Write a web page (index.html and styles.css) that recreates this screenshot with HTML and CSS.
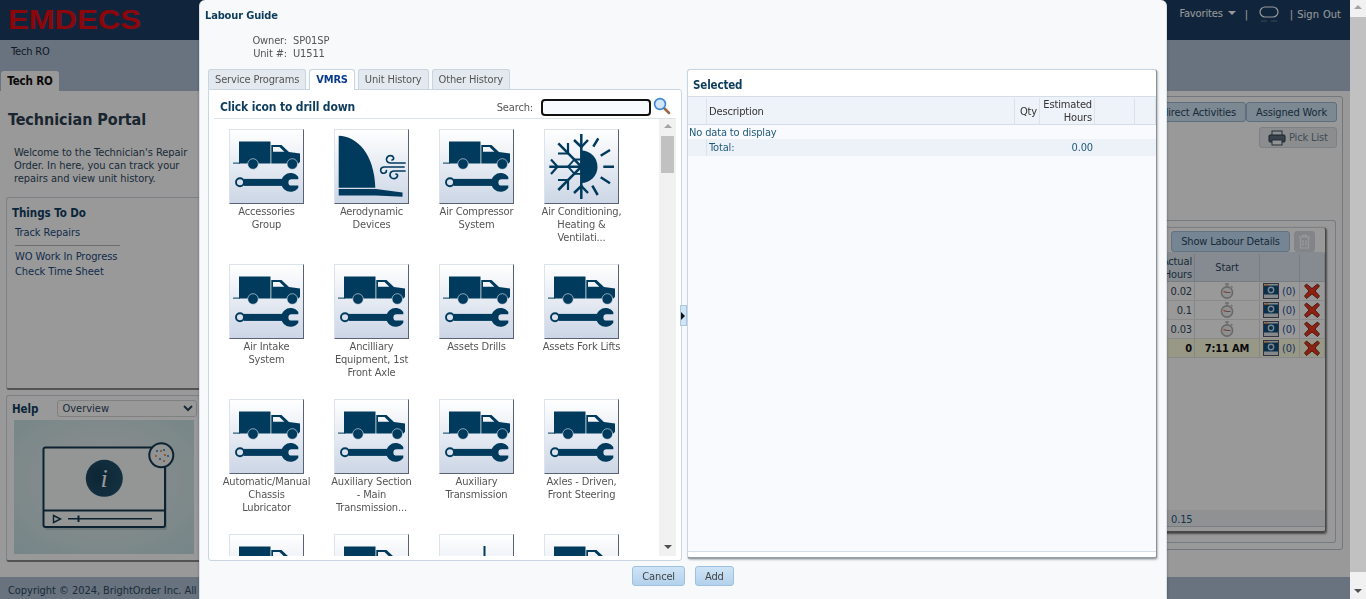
FILE: index.html
```html
<!DOCTYPE html>
<html>
<head>
  <title>Tech RO</title>
  <link rel="stylesheet" href="styles.css">
</head>
<body>
  <svg class="sprite" xmlns="http://www.w3.org/2000/svg">
    <symbol id="truck" viewBox="0 0 75 75">
      <rect x="4" y="33.6" width="7" height="1" fill="#003a5d"/>
      <path fill="#003a5d" d="M10 12.5H41.5V34.5H10Z"/>
      <path fill="#003a5d" d="M42.3 16H52.5L60 23L71 24.4V32.7L69.5 34.5H42.3Z"/>
      <path fill="#f3f5fa" d="M44 18H50.5L55.3 22.7H44Z"/>
      <circle cx="24" cy="35" r="5.3" fill="#003a5d" stroke="#e6eaf2" stroke-width=".6"/>
      <circle cx="63.3" cy="35" r="5.3" fill="#003a5d" stroke="#e6eaf2" stroke-width=".6"/>
      <circle cx="11" cy="53.3" r="4" fill="none" stroke="#003a5d" stroke-width="1.9"/>
      <rect x="15" y="49.9" width="40" height="7" fill="#003a5d"/>
      <path fill="#003a5d" d="M69.3 48A9.4 9.4 0 1 0 69.3 58.8L69.3 56.6H62.6A3.2 3.2 0 0 1 62.6 50.2H69.3Z"/>
    </symbol>
    <symbol id="aero" viewBox="0 0 75 75">
      <path fill="#003a5d" d="M4.7 6.7C23 7.5 40 24 41.3 58.7H4.7Z"/>
      <path fill="#003a5d" d="M4.7 60H42L68.5 63.6V67.7L42 66.4H4.7Z"/>
      <g fill="none" stroke="#003a5d" stroke-width="1.7" stroke-linecap="round">
        <path d="M71 34H56.5C53 34 51.5 31 53 28.5C54.5 26 58.5 26 59.5 28.5C60 30 59 31 58 31"/>
        <path d="M70 38H50C46.5 38 45.8 42 47.5 43.5C49.5 45 52.5 44 52.5 41.5"/>
        <path d="M71 42H60C56 42 55 46 57 48.5C59 50.5 63 50 63.5 47C63.8 45.5 62.5 45 62 45"/>
      </g>
    </symbol>
    <symbol id="climate" viewBox="0 0 75 75">
      <path fill="#003a5d" d="M37.3 21.5A16.2 16.2 0 0 1 37.3 53.9Z"/>
      <g fill="none" stroke="#003a5d" stroke-width="2.5">
        <path d="M37.3 5V70"/>
        <path d="M49.3 17.7L54.3 9.3M56.7 26.7L66 21M59.3 37.7H70M56.7 48.3L66 54.3M48.3 56.7L53.7 66"/>
        <path d="M5.3 37.7H37.3M14.3 14.3L37.3 37.7M14.3 61L37.3 37.7"/>
        <path d="M30 11L37.3 18L44 11M30 64L37.3 57L44 64"/>
        <path d="M7 30.5L13.5 37.7L7 45M14 24.5H24V14M14 51H24V61" stroke-width="2.2"/>
        <path d="M24 37.7L30.5 30.5H37.3M24 37.7L30.5 44.8H37.3" stroke-width="1.8"/>
      </g>
    </symbol>
    <symbol id="post" viewBox="0 0 75 75">
      <rect x="44.5" y="12" width="2" height="55" fill="#003a5d"/>
    </symbol>
    <symbol id="watch" viewBox="0 0 16 16">
      <path d="M6 1H10M8 1V4M12 3L13.5 4.5" fill="none" stroke="#b8b8b8" stroke-width="1.4"/>
      <circle cx="8" cy="9.5" r="5.6" fill="#f0f0f0" stroke="#b0b0b0" stroke-width="1.6"/>
      <path d="M8 9.5L4.5 8.5" stroke="#e85050" stroke-width="1.2"/>
      <path d="M8 9.5H11.5" stroke="#888" stroke-width="1"/>
    </symbol>
    <symbol id="camera" viewBox="0 0 16 16">
      <rect x=".5" y=".5" width="15" height="15" fill="#dfe4e8" stroke="#556"/>
      <rect x="1" y="2.5" width="14" height="9" fill="#0f4f7d"/>
      <rect x="2" y="1.5" width="3" height="1.5" fill="#f08030"/>
      <circle cx="8" cy="7" r="3.4" fill="#cfe0ea"/>
      <circle cx="8" cy="7" r="2" fill="#0f4f7d"/>
    </symbol>
    <symbol id="cross" viewBox="0 0 16 16">
      <path d="M2.5 1L8 5.5L13.5 1L15.5 3L11 8L15.5 13L13.5 15.5L8 11L2.5 15.5L.5 13L5 8L.5 3Z" fill="#ef3a1a" stroke="#511" stroke-width=".8"/>
    </symbol>
  </svg>

  <div class="page">
    <header class="topbar">
      <div class="logo"><span>EMDECS</span></div>
      <nav class="topnav">
        <span class="fav">Favorites <i class="caret"></i></span>
        <span class="sep">|</span>
        <svg class="chat" width="20" height="16" viewBox="0 0 20 16"><rect x="1" y="1" width="18" height="10" rx="5" fill="none" stroke="#fff" stroke-width="1.2"/><path d="M2 15H8M12 15H18" stroke="#5f7b96" stroke-width="1"/></svg>
        <span class="signout">| Sign Out</span>
      </nav>
    </header>

    <div class="band">
      <div class="crumb">Tech RO</div>
      <div class="tab-main">Tech RO</div>
    </div>

    <div class="content">
      <aside class="side">
        <h1>Technician Portal</h1>
        <p class="intro">Welcome to the Technician's Repair Order. In here, you can track your repairs and view unit history.</p>
        <section class="box todo">
          <h3>Things To Do</h3>
          <a class="first">Track Repairs</a>
          <hr>
          <a>WO Work In Progress</a>
          <a>Check Time Sheet</a>
        </section>
        <section class="box help">
          <div class="help-head">
            <h3>Help</h3>
            <select class="help-select"><option>Overview</option></select>
          </div>
          <svg class="help-pic" viewBox="0 0 180 134" width="180" height="134">
            <defs>
              <radialGradient id="pic-bg" cx="50%" cy="45%" r="70%">
                <stop offset="0" stop-color="#eceeee"/>
                <stop offset="1" stop-color="#c6e0e4"/>
              </radialGradient>
              <radialGradient id="info-bg" cx="35%" cy="45%" r="70%">
                <stop offset="0" stop-color="#173f58"/>
                <stop offset="1" stop-color="#22536e"/>
              </radialGradient>
            </defs>
            <rect width="180" height="134" fill="url(#pic-bg)"/>
            <rect x="31" y="31" width="122" height="79" rx="2" fill="#8fa5a6" opacity=".45"/>
            <rect x="29.5" y="27.5" width="121.5" height="79.5" rx="2" fill="#f7f8f8" stroke="#163a50" stroke-width="2"/>
            <path d="M29.5 90.5H151" stroke="#163a50" stroke-width="2"/>
            <circle cx="90.3" cy="58.3" r="18.5" fill="url(#info-bg)"/>
            <text x="90" y="67" class="pic-i">i</text>
            <path d="M39.5 95.5L46.5 99L39.5 102.5Z" fill="none" stroke="#163a50" stroke-width="1.4"/>
            <path d="M54 98.8H138" stroke="#163a50" stroke-width="1.6"/>
            <path d="M64.5 95.5V102" stroke="#163a50" stroke-width="2"/>
            <circle cx="147.3" cy="35.3" r="12" fill="#f4f5f5" stroke="#163a50" stroke-width="2"/>
            <g fill="#3f88c2">
              <circle cx="143" cy="31" r="1.1"/><circle cx="150" cy="30" r="1.1"/><circle cx="154" cy="36" r="1.1"/><circle cx="146" cy="39" r="1.1"/>
            </g>
            <g fill="#e8802c">
              <circle cx="147" cy="31" r="1"/><circle cx="142" cy="36" r="1"/><circle cx="151" cy="35" r="1"/><circle cx="150" cy="41" r="1"/>
            </g>
          </svg>
        </section>
      </aside>

      <main class="main">
        <div class="outer">
          <div class="action-row">
            <button class="btn btn-seg">Indirect Activities</button>
            <button class="btn btn-seg">Assigned Work</button>
          </div>
          <div class="action-row pick-row">
            <button class="btn btn-off">
              <svg width="18" height="16" viewBox="0 0 18 16"><rect x="4" y="1" width="10" height="5" fill="#e8eef4" stroke="#3c4c5c"/><rect x="1" y="5" width="16" height="7" rx="1" fill="#5f6e7e" stroke="#2c3a48"/><rect x="4" y="10" width="10" height="5" fill="#f4f6f8" stroke="#3c4c5c"/></svg>
              Pick List
            </button>
          </div>
          <div class="inner">
            <div class="card">
              <div class="card-tools">
                <button class="btn btn-blue">Show Labour Details</button>
                <button class="btn btn-trash">
                  <svg width="13" height="15" viewBox="0 0 13 15"><path d="M1 3H12M4.5 3V1.3H8.5V3M2.5 3.5V14H10.5V3.5M5 6V12M8 6V12" fill="none" stroke="#fff" stroke-width="1.2"/></svg>
                </button>
              </div>
              <div class="wo-row wo-head">
                <div class="cell right">Actual Hours</div>
                <div class="cell center">Start</div>
                <div class="cell"></div>
                <div class="cell"></div>
              </div>
              <div class="wo-row">
                <div class="cell right">0.02</div>
                <div class="cell center"><svg class="ic"><use href="#watch"/></svg></div>
                <div class="cell photos"><svg class="ic"><use href="#camera"/></svg><span>(0)</span></div>
                <div class="cell center"><svg class="ic"><use href="#cross"/></svg></div>
              </div>
              <div class="wo-row">
                <div class="cell right">0.1</div>
                <div class="cell center"><svg class="ic"><use href="#watch"/></svg></div>
                <div class="cell photos"><svg class="ic"><use href="#camera"/></svg><span>(0)</span></div>
                <div class="cell center"><svg class="ic"><use href="#cross"/></svg></div>
              </div>
              <div class="wo-row">
                <div class="cell right">0.03</div>
                <div class="cell center"><svg class="ic"><use href="#watch"/></svg></div>
                <div class="cell photos"><svg class="ic"><use href="#camera"/></svg><span>(0)</span></div>
                <div class="cell center"><svg class="ic"><use href="#cross"/></svg></div>
              </div>
              <div class="wo-row wo-active">
                <div class="cell right">0</div>
                <div class="cell center">7:11 AM</div>
                <div class="cell photos"><svg class="ic"><use href="#camera"/></svg><span>(0)</span></div>
                <div class="cell center"><svg class="ic"><use href="#cross"/></svg></div>
              </div>
              <div class="wo-total">0.15</div>
            </div>
          </div>
        </div>
      </main>
    </div>

    <footer class="footer">Copyright © 2024, BrightOrder Inc. All rights reserved.</footer>
    <div class="dim"></div>
  </div>

  <div class="scrollbar page-scroll">
    <i class="arrow-up"></i>
    <div class="thumb"></div>
    <i class="arrow-down"></i>
  </div>

  <div class="modal">
    <h2 class="modal-title">Labour Guide</h2>
    <dl class="owner">
      <dt>Owner:</dt><dd>SP01SP</dd>
      <dt>Unit #:</dt><dd>U1511</dd>
    </dl>

    <div class="panes">
      <div class="left-pane">
        <div class="tabs">
          <a class="tab">Service Programs</a>
          <a class="tab active">VMRS</a>
          <a class="tab">Unit History</a>
          <a class="tab">Other History</a>
        </div>
        <div class="guide">
          <div class="guide-head">
            <strong>Click icon to drill down</strong>
            <label class="search">Search:
              <input type="text" class="search-input">
            </label>
            <svg class="search-icon" width="18" height="18" viewBox="0 0 18 18">
              <path d="M10.5 10.5L16 16" stroke="#9a6a44" stroke-width="2.6" stroke-linecap="round"/>
              <circle cx="7" cy="7" r="5.4" fill="#cfe6fb" stroke="#3f86d0" stroke-width="1.6"/>
            </svg>
          </div>
          <div class="guide-body">
            <div class="tiles">
              <a class="tile"><span class="tile-box"><svg><use href="#truck"/></svg></span><span class="tile-name">Accessories<br>Group</span></a>
              <a class="tile"><span class="tile-box"><svg><use href="#aero"/></svg></span><span class="tile-name">Aerodynamic<br>Devices</span></a>
              <a class="tile"><span class="tile-box"><svg><use href="#truck"/></svg></span><span class="tile-name">Air Compressor<br>System</span></a>
              <a class="tile"><span class="tile-box"><svg><use href="#climate"/></svg></span><span class="tile-name">Air Conditioning,<br>Heating &amp;<br>Ventilati...</span></a>
              <a class="tile"><span class="tile-box"><svg><use href="#truck"/></svg></span><span class="tile-name">Air Intake<br>System</span></a>
              <a class="tile"><span class="tile-box"><svg><use href="#truck"/></svg></span><span class="tile-name">Ancilliary<br>Equipment, 1st<br>Front Axle</span></a>
              <a class="tile"><span class="tile-box"><svg><use href="#truck"/></svg></span><span class="tile-name">Assets Drills</span></a>
              <a class="tile"><span class="tile-box"><svg><use href="#truck"/></svg></span><span class="tile-name">Assets Fork Lifts</span></a>
              <a class="tile"><span class="tile-box"><svg><use href="#truck"/></svg></span><span class="tile-name">Automatic/Manual<br>Chassis<br>Lubricator</span></a>
              <a class="tile"><span class="tile-box"><svg><use href="#truck"/></svg></span><span class="tile-name">Auxiliary Section<br>- Main<br>Transmission...</span></a>
              <a class="tile"><span class="tile-box"><svg><use href="#truck"/></svg></span><span class="tile-name">Auxiliary<br>Transmission</span></a>
              <a class="tile"><span class="tile-box"><svg><use href="#truck"/></svg></span><span class="tile-name">Axles - Driven,<br>Front Steering</span></a>
              <a class="tile"><span class="tile-box"><svg><use href="#truck"/></svg></span></a>
              <a class="tile"><span class="tile-box"><svg><use href="#truck"/></svg></span></a>
              <a class="tile"><span class="tile-box"><svg><use href="#post"/></svg></span></a>
              <a class="tile"><span class="tile-box"><svg><use href="#truck"/></svg></span></a>
            </div>
            <div class="scrollbar guide-scroll">
              <i class="arrow-up"></i>
              <div class="thumb"></div>
              <i class="arrow-down"></i>
            </div>
          </div>
        </div>
      </div>

      <button class="splitter"><i></i></button>

      <div class="selected">
        <h3>Selected</h3>
        <div class="sel-row sel-head">
          <div></div>
          <div>Description</div>
          <div class="right">Qty</div>
          <div class="right">Estimated Hours</div>
          <div></div>
          <div></div>
        </div>
        <div class="sel-empty">No data to display</div>
        <div class="sel-row sel-total">
          <div class="sel-stub"></div>
          <div>Total:</div>
          <div></div>
          <div class="right">0.00</div>
          <div></div>
          <div></div>
        </div>
        <div class="sel-fill"></div>
      </div>
    </div>

    <div class="modal-foot">
      <button class="btn-foot">Cancel</button>
      <button class="btn-foot">Add</button>
    </div>
  </div>
</body>
</html>
```

FILE: styles.css
```css
* {
  box-sizing: border-box;
}

html, body {
  height: 100%;
}

body {
  margin: 0;
  display: flex;
  overflow: hidden;
  font-family: "DejaVu Sans Condensed", "DejaVu Sans", sans-serif;
  font-stretch: condensed;
  font-size: 11px;
  line-height: 13px;
  letter-spacing: -0.15px;
  color: #2f4860;
  background-color: #fff;
}

.sprite {
  position: absolute;
  width: 0;
  height: 0;
}

h1, h2, h3, p, dl, dd {
  margin: 0;
}

/* page behind the dialog */
.page {
  flex: 1;
  display: flex;
  flex-direction: column;
  min-width: 0;
}

.dim {
  position: fixed;
  top: 0;
  left: 0;
  right: 16px;
  bottom: 0;
  background-color: rgba(0, 0, 0, 0.4);
}

.topbar {
  height: 40px;
  display: flex;
  justify-content: space-between;
  background-color: #1b3f65;
}

.logo {
  padding: 5px 0 0 8px;
  line-height: 30px;
  font-family: "Liberation Sans", sans-serif;
  font-stretch: normal;
  letter-spacing: 0;
  font-weight: bold;
  font-size: 27px;
  color: #e80c14;
}

.logo span {
  display: inline-block;
  transform: scaleX(1.15);
  transform-origin: left center;
}

.topnav {
  display: flex;
  align-items: flex-start;
  padding: 7px 9px 0 0;
  color: #fff;
}

.caret {
  display: inline-block;
  margin-left: 2px;
  vertical-align: 2px;
  border: 4px solid transparent;
  border-bottom: 0;
  border-top-color: #fff;
}

.sep {
  margin: 1px 11px 0 9px;
}

.chat {
  margin-top: -1px;
}

.signout {
  margin: 1px 0 0 11px;
  word-spacing: 1px;
  letter-spacing: 0;
}

.band {
  position: relative;
  height: 51px;
  padding: 5px 0 0 11px;
  color: #2f4860;
  background-color: #adc0d4;
}

.crumb {
  color: #1e2c3a;
}

.tab-main {
  margin: 13px 0 0 -10px;
  width: 58px;
  height: 20px;
  line-height: 20px;
  text-align: center;
  font-weight: bold;
  font-size: 11.5px;
  color: #111;
  background-color: #fff;
  border-radius: 3px 3px 0 0;
}

.content {
  flex: 1;
  display: flex;
  min-height: 0;
  background-color: #fff;
}

.side {
  width: 205px;
  flex-shrink: 0;
  padding: 0 0 0 6px;
  letter-spacing: -0.05px;
}

.side h1 {
  margin: 19px 0 0 2px;
  font-size: 16px;
  line-height: 20px;
  color: #2c3e50;
}

.intro {
  margin: 16px 0 0 8px;
  width: 178px;
}

.box {
  border: 1px solid #d0d6dd;
  border-right: 0;
  border-bottom: 2px solid #8a8a8a;
  border-radius: 3px;
}

.box h3 {
  font-size: 11.5px;
  line-height: 16px;
  color: #123f63;
}

.todo {
  height: 193px;
  margin-top: 12px;
  padding: 7px 5px;
}

.todo a {
  display: block;
  margin-left: 3px;
  line-height: 15px;
  color: #1c4a80;
}

.todo .first {
  margin-top: 4px;
}

.todo hr {
  width: 105px;
  height: 1px;
  margin: 5px 0 3px 3px;
  border: 0;
  background-color: #b5b5b5;
}

.help {
  height: 167px;
  margin-top: 5px;
  padding: 4px 5px;
}

.help-head {
  display: flex;
  align-items: center;
  gap: 19px;
}

.help-select {
  width: 140px;
  height: 17px;
  padding: 0;
  font: inherit;
  color: #2f4860;
  border: 1px solid #d5d5d5;
  border-radius: 3px;
  background-color: #fff;
}

.help-pic {
  display: block;
  margin: 3px 0 0 2px;
}

.pic-i {
  font-family: "Liberation Serif", serif;
  font-style: italic;
  font-size: 26px;
  text-anchor: middle;
  fill: #fff;
}

.main {
  flex: 1;
  padding: 5px 7px 27px 0;
  min-width: 0;
}

.outer {
  height: 100%;
  padding: 5px 5px 7px 0;
  border: 1px solid #bdc6d0;
  border-radius: 3px;
}

.action-row {
  display: flex;
  justify-content: flex-end;
}

.pick-row {
  margin-top: 5px;
}

.btn {
  height: 21px;
  padding: 0 9px;
  font: inherit;
  letter-spacing: inherit;
  color: #2a4660;
  border: 1px solid #a5bfd6;
  border-radius: 3px;
  background-color: #cfe4f6;
}

.btn-seg {
  height: 20px;
  border-color: #9cb8d2;
}

.btn-off {
  display: flex;
  align-items: center;
  gap: 3px;
  width: 78px;
  padding: 0 0 0 8px;
  color: #6e7e8e;
  background-color: #e8ebee;
  border-color: #d3d6da;
}

.inner {
  height: 323px;
  margin: 72px 1px 0 0;
  padding: 6px 9px 9px 0;
  border-top: 1px solid #c5cdd6;
  border-right: 1px solid #c5cdd6;
  border-bottom: 1px solid #c5cdd6;
  border-radius: 3px;
}

.card {
  height: 100%;
  display: flex;
  flex-direction: column;
  padding-bottom: 4px;
  border-top: 1px solid #cfd6dd;
  border-right: 1px solid #777;
  border-bottom: 2px solid #777;
  border-radius: 3px;
  box-shadow: 1px 1px 2px rgba(0, 0, 0, 0.5);
}

.card-tools {
  display: flex;
  justify-content: flex-end;
  gap: 4px;
  padding: 3px 10px 0 0;
}

.btn-blue {
  width: 119px;
  padding: 0;
  background-color: #c4def5;
}

.btn-trash {
  display: flex;
  align-items: center;
  justify-content: center;
  width: 21px;
  padding: 0;
  background-color: #d9dde1;
  border-color: #d9dde1;
}

.wo-row {
  display: grid;
  grid-template-columns: 1fr 65px 40px 25px;
  height: 19px;
  color: #2f4860;
  border-bottom: 1px solid #e7e7e7;
}

.wo-row .cell {
  display: flex;
  align-items: center;
  border-right: 1px solid #e2e2e2;
}

.wo-head {
  height: 30px;
  padding-top: 2px;
  background-color: #dfe8f2;
  border-bottom: 1px solid #c8d0d8;
}

.wo-head .cell {
  border-right-color: #c9d2db;
}

.wo-row .right {
  justify-content: flex-end;
  padding-right: 2px;
  text-align: right;
  margin-left: calc(100% - 45px);
}

.wo-row .center {
  justify-content: center;
}

.wo-active {
  font-weight: bold;
  color: #111;
  background-color: #fdfde0;
}

.photos {
  gap: 3px;
  padding-left: 3px;
  color: #2a4f9c;
  font-weight: normal;
}

.ic {
  width: 16px;
  height: 16px;
}

.wo-total {
  margin-top: auto;
  height: 17px;
  width: 100%;
  padding: 3px 0 0 0;
  text-align: left;
  text-indent: 965px;
  color: #1f5a85;
  background-color: #f0f2f4;
  border-bottom: 1px solid #c8d0d8;
}

.footer {
  height: 22px;
  padding: 7px 0 0 8px;
  color: #2f4860;
  background-color: #adc0d4;
  letter-spacing: -0.05px;
}

/* scrollbars */
.scrollbar {
  flex-shrink: 0;
  display: flex;
  flex-direction: column;
  align-items: center;
  width: 17px;
  background-color: #f1f1f1;
}

.thumb {
  flex-shrink: 0;
  background-color: #c1c1c1;
}

.arrow-up,
.arrow-down {
  display: block;
  flex-shrink: 0;
  border: 4px solid transparent;
}

.arrow-up {
  margin: 5px 0 8px;
  border-top: 0;
  border-bottom-color: #a3a3a3;
}

.arrow-down {
  margin: auto 0 7px;
  border-bottom: 0;
  border-top-color: #505050;
}

.page-scroll {
  width: 16px;
}

.page-scroll .thumb {
  flex: 1;
  width: 16px;
  margin-top: 0;
}

.page-scroll .arrow-down {
  margin: 17px 0 6px;
}

.guide-scroll .thumb {
  width: 13px;
  height: 37px;
}

/* labour guide dialog */
.modal {
  position: fixed;
  top: 0;
  left: 199px;
  width: 968px;
  height: 599px;
  display: flex;
  flex-direction: column;
  padding: 9px 9px 0;
  background-color: #f8f9fa;
  border-left: 1px solid #d9e1ea;
  border-right: 1px solid #d9e1ea;
  border-radius: 6px 6px 0 0;
  box-shadow: 0 0 3px rgba(0, 0, 0, 0.3);
  color: #444;
}

.modal-title {
  margin-left: -4px;
  font-size: 11px;
  font-weight: bold;
  line-height: 13px;
  color: #0d3c5c;
}

.owner {
  display: grid;
  grid-template-columns: 78px auto;
  justify-content: start;
  column-gap: 6px;
  margin-top: 12px;
  color: #555;
}

.owner dt {
  text-align: right;
}

.panes {
  display: flex;
  align-items: flex-start;
  margin-top: 9px;
}

.left-pane {
  width: 475px;
  margin-left: -1px;
}

.tabs {
  display: flex;
  gap: 3px;
  height: 20px;
}

.tab {
  height: 20px;
  line-height: 20px;
  padding: 0 6px;
  color: #555;
  background-color: #e3e9ee;
  border: 1px solid #c9d5e0;
  border-bottom: 0;
  border-radius: 3px 3px 0 0;
}

.tab.active {
  position: relative;
  height: 21px;
  font-weight: bold;
  color: #0b3c8c;
  background-color: #fff;
  z-index: 1;
}

.guide {
  height: 472px;
  padding: 0 5px 4px;
  background-color: #fff;
  border: 1px solid #c9d5e0;
  border-radius: 0 3px 3px 3px;
}

.guide-head {
  display: flex;
  align-items: center;
  height: 29px;
  padding: 6px 0 0 6px;
  border-bottom: 1px solid #dbe3ea;
}

.guide-head strong {
  flex: 1;
  margin-top: 1px;
  font-size: 12px;
  color: #0d3c5c;
}

.search {
  display: flex;
  align-items: center;
  gap: 8px;
  color: #555;
}

.search-input {
  width: 110px;
  height: 17px;
  padding: 0;
  background-color: #f7fbff;
  border: 2px solid #111;
  border-radius: 4px;
}

.search-icon {
  margin: 0 5px 2px 2px;
}

.guide-body {
  display: flex;
  height: 437px;
}

.tiles {
  flex: 1;
  display: grid;
  grid-template-columns: repeat(4, 105px);
  grid-auto-rows: 135px;
  padding-top: 10px;
  overflow: hidden;
}

.tile {
  display: flex;
  flex-direction: column;
  align-items: center;
}

.tile-box {
  display: block;
  flex-shrink: 0;
  width: 75px;
  height: 75px;
  background: linear-gradient(#fff, #ccd6e6);
  border-top: 1px solid #dde3ec;
  border-left: 1px solid #dde3ec;
  border-right: 1px solid #596273;
  border-bottom: 1px solid #596273;
}

.tile-box svg {
  display: block;
  width: 75px;
  height: 75px;
  margin: -1px 0 0 -1px;
}

.tile-name {
  margin-top: 1px;
  text-align: center;
  white-space: nowrap;
  color: #555;
}

.guide-scroll {
  align-self: stretch;
}

.splitter {
  width: 7px;
  height: 21px;
  margin: 236px 0 0 -2px;
  padding: 0;
  display: flex;
  align-items: center;
  justify-content: center;
  background-color: #cfe4f6;
  border: 1px solid #a9c8e2;
}

.splitter i {
  border: 4px solid transparent;
  border-right: 0;
  border-left-color: #111;
}

.selected {
  display: flex;
  flex-direction: column;
  width: 471px;
  height: 490px;
  background-color: #fff;
  border: 1px solid #c9d5e0;
  border-right: 1px solid #8a9099;
  border-bottom: 2px solid #9aa0a8;
  border-radius: 3px;
  box-shadow: 1px 1px 2px rgba(0, 0, 0, 0.25);
}

.selected h3 {
  padding: 9px 0 4px 5px;
  height: 26px;
  font-size: 11.5px;
  color: #0d3c5c;
}

.sel-row {
  display: grid;
  grid-template-columns: 19px 308px 25px 55px 40px 21px;
  color: #333;
}

.sel-row .right {
  text-align: right;
  padding-right: 2px;
}

.sel-head {
  height: 29px;
  padding-top: 1px;
  background-color: #eef2f9;
  border-top: 1px solid #d5dde6;
  border-bottom: 1px solid #d5dde6;
}

.sel-head > div {
  display: flex;
  align-items: center;
  justify-content: flex-start;
  padding-left: 2px;
  border-right: 1px solid #dde3ec;
}

.sel-head .right {
  justify-content: flex-end;
}

.sel-empty {
  height: 14px;
  padding: 1px 0 0 1px;
  color: #1f5a7a;
  background-color: #f8fafe;
}

.sel-total {
  height: 17px;
  line-height: 18px;
  color: #1f5a7a;
  background-color: #edf2f8;
}

.sel-total > div {
  padding-left: 2px;
}

.sel-stub {
  border-right: 1px solid #dde3ec;
  border-bottom: 1px solid #dde3ec;
}

.sel-fill {
  flex: 1;
  margin-bottom: 5px;
  background-color: #f8fafe;
  border-bottom: 1px solid #d5dde6;
}

.modal-foot {
  display: flex;
  justify-content: center;
  gap: 10px;
  margin-top: 5px;
}

.btn-foot {
  height: 20px;
  padding: 0 9px;
  font: inherit;
  letter-spacing: inherit;
  color: #444;
  background: linear-gradient(#cfe4f6, #b3d1ec);
  border: 1px solid #9dc1de;
  border-radius: 3px;
}
```
